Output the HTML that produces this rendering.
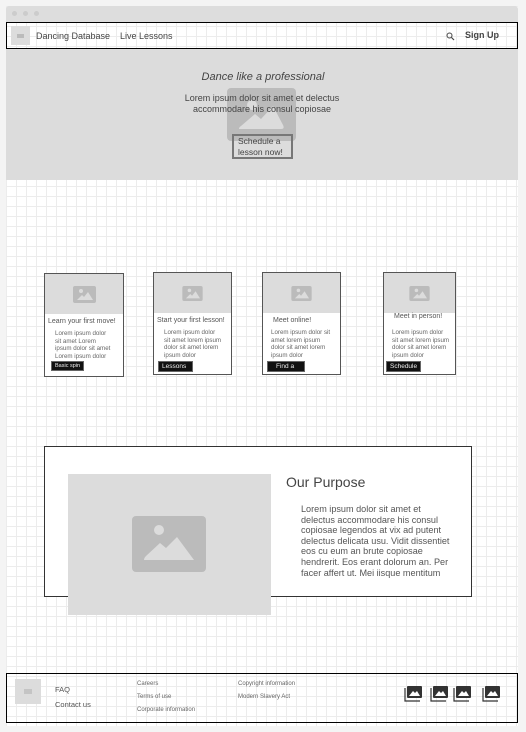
<!DOCTYPE html><html><head><style>
*{margin:0;padding:0;box-sizing:border-box}
body{width:526px;height:732px;background:#f4f4f4;font-family:"Liberation Sans",sans-serif;position:relative;overflow:hidden;color:#444}
.a{position:absolute}
.win{left:6px;top:6px;width:512px;height:720px;background-color:#fff;background-image:linear-gradient(#ececec 1px,transparent 1px),linear-gradient(90deg,#ececec 1px,transparent 1px);background-size:10px 10px}
.card{position:absolute;border:1px solid #555;background:#fff}
.card .im{height:40px;background:#dcdcdc;display:flex;align-items:center;justify-content:center}
.card h4{font-weight:normal;font-size:7px;color:#555;margin:4px 0 0 3px;white-space:nowrap}
.card p{font-size:6.2px;line-height:7.5px;color:#666;margin:5px 0 0 10px;width:58px}
.btn{position:absolute;background:#111;color:#eee;font-size:6.5px;padding:1px 3px;border:1px solid #666}
.f{font-size:6px;color:#666;position:absolute}
</style></head><body>
<div class="a win"></div>
<div class="a" style="left:6px;top:6px;width:512px;height:16px;background:#ddd;border-radius:3px 3px 0 0"></div>
<div class="a" style="left:12px;top:11px;width:5px;height:5px;border-radius:50%;background:#ccc"></div>
<div class="a" style="left:23px;top:11px;width:5px;height:5px;border-radius:50%;background:#ccc"></div>
<div class="a" style="left:34px;top:11px;width:5px;height:5px;border-radius:50%;background:#ccc"></div>
<div class="a" style="left:6px;top:22px;width:512px;height:27px;border:1px solid #000"></div>
<div class="a" style="left:11px;top:26px;width:19px;height:19px;background:#dcdcdc"><div style="margin:8px 6px;width:7px;height:4px;background:#bbb"></div></div>
<div class="a" style="left:36px;top:31px;font-size:9px;color:#444">Dancing Database</div>
<div class="a" style="left:120px;top:31px;font-size:9px;color:#444">Live Lessons</div>
<svg class="a" style="left:446px;top:32px" width="9" height="9" viewBox="0 0 9 9"><circle cx="3.5" cy="3.5" r="2.5" fill="none" stroke="#444" stroke-width="1"/><path d="M5.5 5.5 8 8" stroke="#444" stroke-width="1.2"/></svg>
<div class="a" style="left:465px;top:30px;font-size:9px;font-weight:bold;color:#444">Sign Up</div>
<div class="a" style="left:6px;top:49px;width:512px;height:131px;background:#dcdcdc"></div>
<div class="a" style="left:227px;top:88px;width:69px;height:53px;background:#bbb;border-radius:4px"></div>
<svg class="a" style="left:227px;top:88px" width="69" height="53" viewBox="0 0 69 53"><circle cx="25" cy="17" r="5" fill="#dcdcdc"/><path d="M12 41 Q12 39 14 38 L28 26 L34 31 L46 18 L56 37 Q58 41 54 41Z" fill="#dcdcdc"/></svg>
<div class="a" style="left:0;width:526px;top:71px;text-align:center;font-size:11px;font-style:italic;color:#444">Dance like a professional</div>
<div class="a" style="left:0;width:524px;top:93px;text-align:center;font-size:9px;line-height:11px;color:#444">Lorem ipsum dolor sit amet et delectus<br>accommodare his consul copiosae</div>
<div class="a" style="left:232px;top:134px;width:61px;height:25px;border:2px solid #777;font-size:8.5px;line-height:11px;padding:0 0 0 4px;color:#444">Schedule a<br>lesson now!</div>

<div class="card" style="left:44px;top:273px;width:80px;height:104px"><div class="im"><svg width="23" height="17" viewBox="0 0 23 17"><rect width="23" height="17" rx="2" fill="#bbb"/><circle cx="8" cy="5" r="2" fill="#dcdcdc"/><path d="M4 14 9 9 11 11 15 6 20 14Z" fill="#dcdcdc"/></svg></div><h4>Learn your first move!</h4><p style="width:56px">Lorem ipsum dolor sit amet Lorem ipsum dolor sit amet Lorem ipsum dolor</p><div class="btn" style="left:6px;top:87px;font-size:5.5px">Basic spin</div></div>
<div class="card" style="left:153px;top:272px;width:79px;height:103px"><div class="im"><svg width="21" height="15" viewBox="0 0 23 17"><rect width="23" height="17" rx="2" fill="#bbb"/><circle cx="8" cy="5" r="2" fill="#dcdcdc"/><path d="M4 14 9 9 11 11 15 6 20 14Z" fill="#dcdcdc"/></svg></div><h4>Start your first lesson!</h4><p>Lorem ipsum dolor sit amet lorem ipsum dolor sit amet lorem ipsum dolor</p><div class="btn" style="left:4px;top:88px;width:35px">Lessons</div></div>
<div class="card" style="left:262px;top:272px;width:79px;height:103px"><div class="im"><svg width="21" height="15" viewBox="0 0 23 17"><rect width="23" height="17" rx="2" fill="#bbb"/><circle cx="8" cy="5" r="2" fill="#dcdcdc"/><path d="M4 14 9 9 11 11 15 6 20 14Z" fill="#dcdcdc"/></svg></div><h4 style="margin-left:10px">Meet online!</h4><p style="margin-left:8px;width:62px">Lorem ipsum dolor sit amet lorem ipsum dolor sit amet lorem ipsum dolor</p><div class="btn" style="left:4px;top:88px;width:38px;padding-left:8px">Find a</div></div>
<div class="card" style="left:383px;top:272px;width:73px;height:103px"><div class="im"><svg width="21" height="15" viewBox="0 0 23 17"><rect width="23" height="17" rx="2" fill="#bbb"/><circle cx="8" cy="5" r="2" fill="#dcdcdc"/><path d="M4 14 9 9 11 11 15 6 20 14Z" fill="#dcdcdc"/></svg></div><h4 style="margin-left:10px;margin-top:0">Meet in person!</h4><p style="margin-left:8px;margin-top:9px">Lorem ipsum dolor sit amet lorem ipsum dolor sit amet lorem ipsum dolor</p><div class="btn" style="left:2px;top:88px">Schedule</div></div>

<div class="a" style="left:44px;top:446px;width:428px;height:151px;border:1px solid #333;background:#fff"></div>
<div class="a" style="left:68px;top:474px;width:203px;height:141px;background:#dcdcdc"></div>
<svg class="a" style="left:132px;top:516px" width="74" height="56" viewBox="0 0 74 56"><rect width="74" height="56" rx="4" fill="#bbb"/><circle cx="27" cy="14" r="5" fill="#dcdcdc"/><path d="M12 44 Q12 42 14 40 L28 27 L34 32 L45 21 L62 44Z" fill="#dcdcdc"/></svg>
<div class="a" style="left:286px;top:474px;font-size:14px;color:#444">Our Purpose</div>
<div class="a" style="left:301px;top:504px;width:153px;font-size:9.1px;line-height:10.6px;color:#555">Lorem ipsum dolor sit amet et<br>delectus accommodare his consul copiosae legendos at vix ad putent delectus delicata usu. Vidit dissentiet eos cu eum an brute copiosae hendrerit. Eos erant dolorum an. Per facer affert ut. Mei iisque mentitum</div>

<div class="a" style="left:6px;top:673px;width:512px;height:50px;border:1px solid #000"></div>
<div class="a" style="left:15px;top:679px;width:26px;height:25px;background:#dcdcdc"><div style="margin:10px 9px;width:8px;height:5px;background:#c4c4c4"></div></div>
<div class="a" style="left:55px;top:685px;font-size:7.5px;color:#555">FAQ</div>
<div class="a" style="left:55px;top:700px;font-size:7.5px;color:#555">Contact us</div>
<div class="f" style="left:137px;top:681px">Careers</div>
<div class="f" style="left:137px;top:694px">Terms of use</div>
<div class="f" style="left:137px;top:707px">Corporate information</div>
<div class="f" style="left:238px;top:681px">Copyright information</div>
<div class="f" style="left:238px;top:694px">Modern Slavery Act</div>
<svg class="a" style="left:404px;top:685px" width="100" height="17" viewBox="0 0 100 17">
<g id="i"><path d="M1 3V16H16" fill="none" stroke="#333" stroke-width="1.2"/><rect x="3" y="1" width="15" height="12" rx="1" fill="#333"/><path d="M5 11 9 6 11 8 13 6 16 11Z" fill="#fff"/></g>
<use href="#i" x="26"/><use href="#i" x="49"/><use href="#i" x="78"/></svg>
</body></html>
